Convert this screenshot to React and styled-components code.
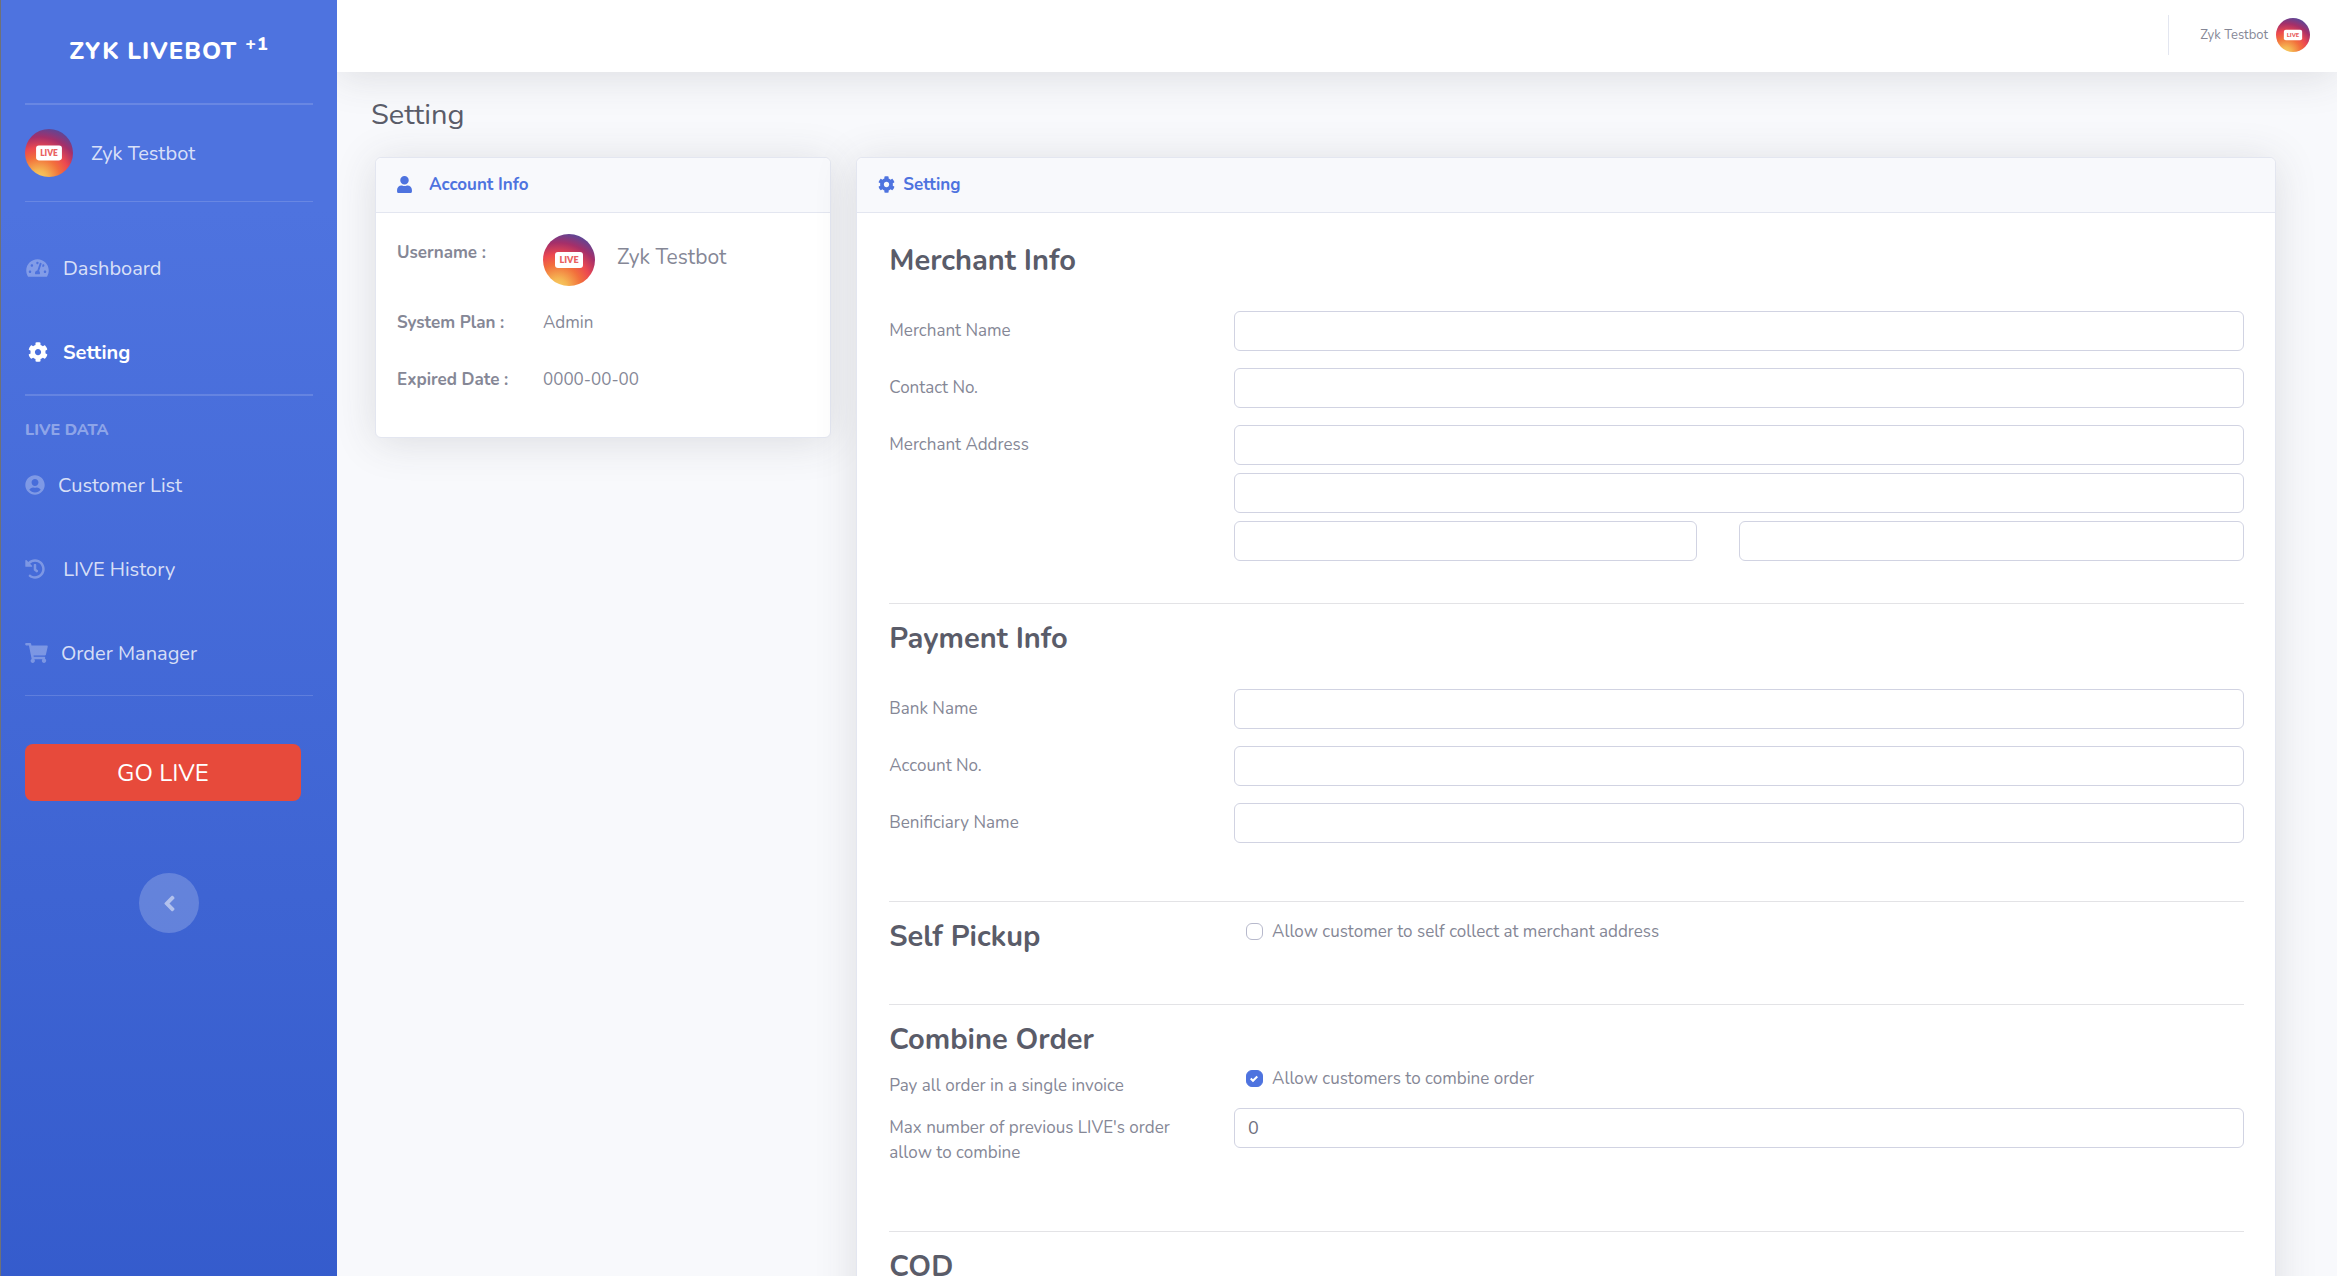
import React from 'react';
import styled, { createGlobalStyle, css } from 'styled-components';
import {
    FaTachometerAlt,
    FaCog,
    FaUserCircle,
    FaHistory,
    FaShoppingCart,
    FaUser,
    FaAngleLeft
} from 'react-icons/fa';

const GlobalStyle = createGlobalStyle`
    * {
        box-sizing: border-box;
    }

    body {
        margin: 0;
        background: #f8f9fc;
        color: #858796;
        font-family: Nunito, Lato, "Open Sans", sans-serif;
        font-size: 17px;
        line-height: 25px;
    }

    input, button {
        font-family: inherit;
    }
`;

const Page = styled.div`
    display: flex;
    height: 100vh;
`;

/* ---- sidebar ---- */

const Sidebar = styled.nav`
    flex: 0 0 337px;
    padding: 0 24px;
    border-left: 1px solid #6e7178;
    background: linear-gradient(180deg, #4e73df 210px, #224abe 2090px);
    color: #fff;
`;

const Brand = styled.a`
    display: flex;
    justify-content: center;
    gap: 8px;
    height: 103px;
    padding-top: 34px;
    color: #fff;
    font-size: 24px;
    font-weight: 800;
    line-height: 34px;
    letter-spacing: 1px;
    text-decoration: none;
    text-transform: uppercase;
`;

const BrandCount = styled.span`
    font-size: 18px;
    line-height: 20px;
`;

const Divider = styled.hr`
    height: 1px;
    margin: 0;
    border: 0;
    background: rgba(255, 255, 255, 0.15);
    ${props => props.$thick && css`height: 2px;`}
`;

const SidebarUser = styled.div`
    display: flex;
    align-items: center;
    gap: 18px;
    height: 96px;
    color: rgba(255, 255, 255, 0.8);
    font-size: 20px;
`;

const NavList = styled.ul`
    margin: 0;
    padding: ${props => props.$padding};
    list-style: none;
`;

const NavLink = styled.a`
    display: flex;
    align-items: center;
    gap: 13px;
    height: 84px;
    color: ${props => props.$active ? '#fff' : 'rgba(255, 255, 255, 0.8)'};
    font-size: 20px;
    font-weight: ${props => props.$active ? 700 : 400};
    text-decoration: none;
    white-space: pre;
`;

const NavIcon = styled.span`
    display: flex;
    justify-content: center;
    width: ${props => props.$fixed ? '25px' : 'auto'};
    color: ${props => props.$active ? '#fff' : 'rgba(255, 255, 255, 0.3)'};

    svg {
        width: ${props => props.$wide ? '23px' : '20px'};
        height: 20px;
    }
`;

const NavHeading = styled.div`
    padding-top: 22px;
    color: rgba(255, 255, 255, 0.4);
    font-size: 16px;
    font-weight: 800;
    text-transform: uppercase;
`;

const LiveButton = styled.button`
    display: block;
    width: 276px;
    height: 57px;
    margin-top: 48px;
    border: 0;
    border-radius: 8px;
    background: #e74a3b;
    color: #fff;
    font-size: 24px;
`;

const ToggleButton = styled.button`
    display: flex;
    align-items: center;
    justify-content: center;
    width: 60px;
    height: 60px;
    margin: 72px auto 0;
    padding: 0;
    border: 0;
    border-radius: 50%;
    background: rgba(255, 255, 255, 0.2);
    color: rgba(255, 255, 255, 0.5);
    font-size: 25px;
`;

/* ---- content ---- */

const Main = styled.div`
    flex: 1;
    min-width: 0;
    overflow-y: auto;
    scrollbar-width: none;
`;

const Topbar = styled.header`
    display: flex;
    align-items: center;
    justify-content: flex-end;
    height: 72px;
    padding: 0 27px 2px;
    background: #fff;
    box-shadow: 0 4px 42px rgba(58, 59, 69, 0.15);
`;

const TopbarUser = styled.div`
    display: flex;
    align-items: center;
    gap: 8px;
    height: 40px;
    padding-left: 31px;
    border-left: 1px solid #e3e6f0;
    font-size: 13px;
`;

const PageTitle = styled.h1`
    margin: 0;
    padding: 24px 34px;
    color: #5a5c69;
    font-size: 29px;
    font-weight: 400;
    line-height: 37px;
`;

const Columns = styled.div`
    display: grid;
    grid-template-columns: 9fr 28fr;
    align-items: start;
    gap: 25px;
    padding: 0 61px 48px 38px;
`;

const Card = styled.section`
    border: 1px solid #e3e6f0;
    border-radius: 6px;
    background: #fff;
    box-shadow: 0 4px 42px rgba(58, 59, 69, 0.15);
`;

const CardHeader = styled.h2`
    display: flex;
    align-items: center;
    gap: ${props => props.$gap};
    height: 55px;
    margin: 0;
    padding: 0 21px 2px;
    border-bottom: 1px solid #e3e6f0;
    border-radius: 6px 6px 0 0;
    background: #f8f9fc;
    color: #4e73df;
    font-size: 17px;
    font-weight: 700;

    svg {
        width: ${props => props.$iconWidth};
        height: 17px;
    }
`;

const InfoList = styled.dl`
    margin: 0;
    padding: 21px 21px 29px;
`;

const InfoRow = styled.div`
    display: grid;
    grid-template-columns: 146px 1fr;
    align-items: center;
    height: 57px;

    dt {
        font-weight: 700;
    }

    dd {
        margin: 0;
    }
`;

const InfoUserRow = styled(InfoRow)`
    align-items: start;
    height: 60px;

    dt {
        line-height: 38px;
    }

    dd {
        display: flex;
        gap: 22px;
        font-size: 21px;
        line-height: 46px;
    }
`;

const Form = styled.form`
    padding: 13px 31px 13px 32px;
`;

const FormSection = styled.fieldset`
    min-width: 0;
    margin: 0;
    padding: 0 0 ${props => props.$bottom};
    border: 0;

    & + & {
        border-top: 1px solid #e3e3e6;
    }
`;

const Rows = styled.div`
    display: grid;
    gap: ${props => props.$gap || '17px'};
`;

const FormRow = styled.div`
    display: grid;
    grid-template-columns: 1fr 3fr;
    align-items: start;
    gap: 8px;
`;

const SectionTitle = styled.h3`
    margin: 0;
    padding: 17px 0 ${props => props.$compact ? '9px' : '33px'};
    color: #5a5c69;
    font-size: 29px;
    font-weight: 700;
    line-height: 35px;
`;

const FieldLabel = styled.label`
    padding: 7px 40px 7px 0;
`;

const Split = styled.div`
    display: grid;
    grid-template-columns: 11fr 12fr;
    gap: 42px;
`;

const Input = styled.input`
    width: 100%;
    height: 40px;
    padding: 0 13px;
    border: 1px solid #d1d3e2;
    border-radius: 6px;
    background: #fff;
    color: #6e707e;
    font-size: 18px;
`;

const Check = styled.label`
    display: flex;
    align-items: center;
    gap: 9px;
    padding: ${props => props.$top || '0'} 0 0 12px;

    input {
        appearance: none;
        width: 17px;
        height: 17px;
        margin: 0;
        border: 1px solid #b7b9cc;
        border-radius: 6px;
        background: #fff;
    }

    input:checked {
        border-color: #4e73df;
        background: #4e73df url("data:image/svg+xml,%3csvg xmlns='http://www.w3.org/2000/svg' viewBox='0 0 8 8'%3e%3cpath fill='%23fff' d='M6.564.75l-3.59 3.612-1.538-1.55L0 4.26l2.974 2.99L8 2.193z'/%3e%3c/svg%3e") center / 8px no-repeat;
    }
`;

const AvatarSvg = styled.svg`
    flex: none;
    display: block;
`;

function Avatar({ id, size }) {
    return (
        <AvatarSvg width={size} height={size} viewBox="0 0 52 52" role="img" aria-label="Zyk Testbot">
            <defs>
                <radialGradient id={id} gradientUnits="userSpaceOnUse" cx="15" cy="54" r="58">
                    <stop offset="0" stopColor="#f8cf66" />
                    <stop offset="0.16" stopColor="#f5b653" />
                    <stop offset="0.4" stopColor="#f2703c" />
                    <stop offset="0.58" stopColor="#ec4850" />
                    <stop offset="0.78" stopColor="#a52f69" />
                    <stop offset="1" stopColor="#514a9e" />
                </radialGradient>
            </defs>
            <circle cx="26" cy="26" r="26" fill={`url(#${id})`} />
            <rect x="12" y="18" width="28" height="16" rx="3" fill="#fff" />
            <text x="26" y="29" textAnchor="middle" fontFamily="Lato, sans-serif" fontWeight="800" fontSize="9" fill="#e9615f">LIVE</text>
        </AvatarSvg>
    );
}

const mainLinks = [
    { label: 'Dashboard', icon: <FaTachometerAlt />, fixed: true, wide: true },
    { label: 'Setting', icon: <FaCog />, fixed: true, active: true }
];

const dataLinks = [
    { label: 'Customer List', icon: <FaUserCircle /> },
    { label: ' LIVE History', icon: <FaHistory /> },
    { label: 'Order Manager', icon: <FaShoppingCart />, wide: true }
];

function NavItems({ links, padding }) {
    return (
        <NavList $padding={padding}>
            {links.map(link => (
                <li key={link.label}>
                    <NavLink href="#" $active={link.active}>
                        <NavIcon $fixed={link.fixed} $wide={link.wide} $active={link.active}>{link.icon}</NavIcon>
                        {link.label}
                    </NavLink>
                </li>
            ))}
        </NavList>
    );
}

function Field({ id, label }) {
    return (
        <FormRow>
            <FieldLabel htmlFor={id}>{label}</FieldLabel>
            <Input id={id} type="text" />
        </FormRow>
    );
}

function SettingForm() {
    return (
        <Form>
            <FormSection $bottom="42px">
                <SectionTitle>Merchant Info</SectionTitle>
                <Rows>
                    <Field id="merchant-name" label="Merchant Name" />
                    <Field id="contact-no" label="Contact No." />
                    <FormRow>
                        <FieldLabel htmlFor="address-1">Merchant Address</FieldLabel>
                        <Rows $gap="8px">
                            <Input id="address-1" type="text" />
                            <Input type="text" aria-label="Address line 2" />
                            <Split>
                                <Input type="text" aria-label="Postcode" />
                                <Input type="text" aria-label="State" />
                            </Split>
                        </Rows>
                    </FormRow>
                </Rows>
            </FormSection>

            <FormSection $bottom="58px">
                <SectionTitle>Payment Info</SectionTitle>
                <Rows>
                    <Field id="bank-name" label="Bank Name" />
                    <Field id="account-no" label="Account No." />
                    <Field id="benificiary-name" label="Benificiary Name" />
                </Rows>
            </FormSection>

            <FormSection $bottom="41px">
                <FormRow>
                    <SectionTitle $compact>Self Pickup</SectionTitle>
                    <Check $top="17px">
                        <input type="checkbox" />
                        Allow customer to self collect at merchant address
                    </Check>
                </FormRow>
            </FormSection>

            <FormSection $bottom="59px">
                <SectionTitle $compact>Combine Order</SectionTitle>
                <Rows $gap="3px">
                    <FormRow>
                        <FieldLabel as="div">Pay all order in a single invoice</FieldLabel>
                        <Check>
                            <input type="checkbox" defaultChecked />
                            Allow customers to combine order
                        </Check>
                    </FormRow>
                    <FormRow>
                        <FieldLabel htmlFor="max-order">Max number of previous LIVE's order allow to combine</FieldLabel>
                        <Input id="max-order" type="text" defaultValue="0" />
                    </FormRow>
                </Rows>
            </FormSection>

            <FormSection $bottom="59px">
                <SectionTitle>COD</SectionTitle>
            </FormSection>
        </Form>
    );
}

function App() {
    return (
        <Page>
            <GlobalStyle />
            <Sidebar>
                <Brand href="#">Zyk Livebot <BrandCount>+1</BrandCount></Brand>
                <Divider $thick />
                <SidebarUser>
                    <Avatar id="avatar-side" size={48} />
                    Zyk Testbot
                </SidebarUser>
                <Divider />
                <NavItems links={mainLinks} padding="24px 0 0" />
                <Divider $thick />
                <NavHeading>Live Data</NavHeading>
                <NavItems links={dataLinks} padding="0" />
                <Divider />
                <LiveButton type="button">GO LIVE</LiveButton>
                <ToggleButton type="button" aria-label="Toggle sidebar"><FaAngleLeft /></ToggleButton>
            </Sidebar>

            <Main>
                <Topbar>
                    <TopbarUser>
                        Zyk Testbot
                        <Avatar id="avatar-top" size={34} />
                    </TopbarUser>
                </Topbar>
                <PageTitle>Setting</PageTitle>
                <Columns>
                    <Card>
                        <CardHeader $gap="17px" $iconWidth="15px"><FaUser />Account Info</CardHeader>
                        <InfoList>
                            <InfoUserRow>
                                <dt>Username :</dt>
                                <dd>
                                    <Avatar id="avatar-info" size={52} />
                                    Zyk Testbot
                                </dd>
                            </InfoUserRow>
                            <InfoRow>
                                <dt>System Plan :</dt>
                                <dd>Admin</dd>
                            </InfoRow>
                            <InfoRow>
                                <dt>Expired Date :</dt>
                                <dd>0000-00-00</dd>
                            </InfoRow>
                        </InfoList>
                    </Card>

                    <Card>
                        <CardHeader $gap="8px" $iconWidth="17px"><FaCog />Setting</CardHeader>
                        <SettingForm />
                    </Card>
                </Columns>
            </Main>
        </Page>
    );
}

export default App;
